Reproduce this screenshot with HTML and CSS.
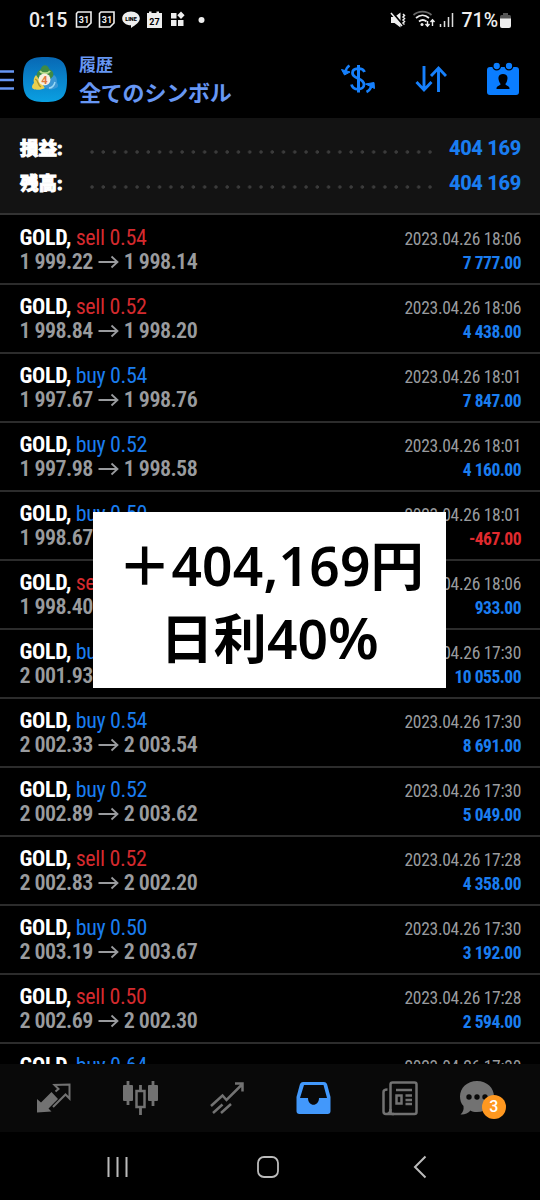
FILE: index.html
```
<!DOCTYPE html>
<html lang="ja">
<head>
    <meta charset="UTF-8">
    <meta name="viewport" content="width=device-width, initial-scale=1.0">
    <title>履歴</title>
    <link rel="stylesheet" href="styles.css">
</head>
<body>
    <div class="status-bar">
        <span class="clock">0:15</span>
        <svg class="status-icons" width="134" height="20" viewBox="0 0 134 20">
            <g fill="none" stroke="#eee" stroke-width="1.6">
                <path d="M3 2h13v11l-4 4H1.500V3.500z"/>
                <path d="M26 2h13v11l-4 4H24.500V3.500z"/>
            </g>
            <path d="M56 1.500c5 0 8.800 3 8.800 7 0 3.500-4 6.500-8.800 9.500v-2.700c-5 0-8.800-3-8.800-6.800s3.800-7 8.800-7z" fill="#eee"/>
            <path d="M72 3h2V1.500h2.500V3h5V1.500H84V3h3v15H72z" fill="#eee"/>
            <path d="M96 3h5.500v5.500H96zM96 10h5.500v6H96zM103 10h5.500v6H103zM106 1.500l3.600 3.700-3.600 3.700-3.700-3.700z" fill="#eee"/>
            <circle cx="126.500" cy="10" r="3" fill="#eee"/>
            <g class="tiny" text-anchor="middle">
                <text x="9" y="13">31</text>
                <text x="32" y="13">31</text>
                <text class="dark line" x="56" y="11">LINE</text>
                <text class="dark" x="79.500" y="14.500">27</text>
            </g>
        </svg>
        <svg class="status-right" width="65" height="20" viewBox="0 0 65 20">
            <path d="M1 7h3.500l6-4.500v15l-6-4.500H1z" fill="#eee"/>
            <path d="M1 1l12 14" stroke="#000" stroke-width="2"/>
            <path d="M1 3l11 13M13 4l1.500 1.500L13 7l1.500 1.500L13 10l1.500 1.500L13 13l1.500 1.500" fill="none" stroke="#eee" stroke-width="1.500"/>
            <g fill="none" stroke="#eee" stroke-width="1.700">
                <path d="M23.500 5c5-4.500 13-4.500 18 0" stroke="#666"/>
                <path d="M26 8c4-3.500 9-3.500 13 0M29 11.500c2.500-2 5-2 7.500 0"/>
                <path d="M37.500 11v5M35.500 14l2 2.200 2-2.200M42.500 16V10M40.500 12l2-2.200 2 2.200" stroke-width="1.400"/>
            </g>
            <circle cx="32" cy="14.500" r="1.500" fill="#eee"/>
            <path d="M50.500 17v-3M54.500 17v-6M58.500 17V7M62.500 17V3" stroke="#ddd" stroke-width="1.500"/>
        </svg>
        <span class="percent">71%</span>
        <svg width="11" height="17" viewBox="0 0 11 17">
            <path d="M3 1h5v2h1.500Q11 3 11 5v3H0V5q0-2 1.500-2H3z" fill="#555"/>
            <path d="M0 6.500h11V14q0 2-2 2H2q-2 0-2-2z" fill="#eee"/>
        </svg>
    </div>

    <div class="header">
        <svg class="menu" width="14" height="22" viewBox="0 0 14 22">
            <path d="M0 2.500h14M0 11h14M0 19.500h14" stroke="#6797f4" stroke-width="2.600"/>
        </svg>
        <svg class="logo" width="44" height="45" viewBox="0 0 44 45">
            <defs>
                <linearGradient id="sky" x1="0" y1="0" x2="0" y2="1">
                    <stop offset="0" stop-color="#0868b4"/>
                    <stop offset="1" stop-color="#0aa0e2"/>
                </linearGradient>
            </defs>
            <path d="M22 0c17 0 22 5 22 22.500S39 45 22 45 0 40 0 22.500 5 0 22 0z" fill="url(#sky)"/>
            <path d="M14 20c-1-4 1-6 4-8 1-5 7-5 8 0 4 2 5 4 4 8l-8 5z" fill="#3f8a45"/>
            <path d="M17 14c2 3 8 3 10 0" stroke="#b6dc88" stroke-width="1.800" fill="none"/>
            <path d="M13 18l9 13c-5 3-13 2-13-1 0-2 1-3 2-4-1-3 0-6 2-8z" fill="#e8cf4e"/>
            <path d="M31 18c3 2 3 5 3 8 2 2 1 5-1 5-3 2-8 2-12-1z" fill="#3a97d4"/>
            <path d="M12 22c4 1 2 6 6 8" stroke="#a8902a" stroke-width="1.200" fill="none"/>
            <path d="M26 31c3 0 5-2 6-6" stroke="#99d8f5" stroke-width="1.500" fill="none"/>
            <circle cx="21.500" cy="22.500" r="6" fill="#f7eedf"/>
            <text class="logo-num" x="21.500" y="26.500" text-anchor="middle">4</text>
        </svg>
        <div class="titles">
            <div class="title-small">履歴</div>
            <div class="title-big">全てのシンボル</div>
        </div>
        <svg class="tool-currency" width="36" height="32" viewBox="0 0 36 32" fill="none" stroke="#1680fc">
            <path d="M24.500 9C23 4.500 12.500 4 12.500 10c0 6.500 11.500 4.500 11.500 11.500 0 6-11 6.500-12.500 0" stroke-width="2.800"/>
            <path d="M18.500 2v27.500" stroke-width="3"/>
            <path d="M9.500 2.500C7 4 6 6 5.500 9" stroke-width="2.600"/>
            <path d="M1.500 6.500l8.500 2.500-5.500 3z" fill="#1680fc" stroke-width="1"/>
            <path d="M26.500 29c3-1.500 4.500-4 5-7" stroke-width="2.600"/>
            <path d="M25.500 21l8.500-1.500.5 6z" fill="#1680fc" stroke-width="1"/>
        </svg>
        <svg class="tool-sort" width="32" height="28" viewBox="0 0 32 28" fill="none" stroke="#1680fc" stroke-width="2.900">
            <path d="M9 1v24M1.500 17L9 25l7.500-8M23.500 27V3M16 11l7.500-8 7.500 8"/>
        </svg>
        <svg class="tool-calendar" width="32" height="34" viewBox="0 0 32 34">
            <path d="M3 5h26q3 0 3 3v22q0 3-3 3H3q-3 0-3-3V8q0-3 3-3z" fill="#0a7dff"/>
            <g fill="#0a7dff" stroke="#000" stroke-width="1.300">
                <circle cx="9.700" cy="4" r="3.800"/>
                <circle cx="22" cy="4" r="3.800"/>
            </g>
            <path d="M16 12c5 0 5 4 4 7-.500 2-1.500 2-1.500 3.500 1 1.500 4 1 4 4.500h-13c0-3.500 3-3 4-4.500 0-1.500-1-1.500-1.500-3.500-1-3-1-7 4-7z" fill="#000"/>
        </svg>
    </div>

    <div class="summary">
        <div class="summary-row">
            <span class="label">損益:</span><span class="dots"></span><span class="total">404 169</span>
        </div>
        <div class="summary-row">
            <span class="label">残高:</span><span class="dots"></span><span class="total">404 169</span>
        </div>
    </div>

    <div class="history">
        <div class="deal">
            <div><div class="order">GOLD, <span class="sell">sell 0.54</span></div><div class="prices">1 999.22<svg class="arrow"><use href="#arrow"/></svg>1 998.14</div></div>
            <div class="right"><div class="date">2023.04.26 18:06</div><div class="profit">7 777.00</div></div>
        </div>
        <div class="deal">
            <div><div class="order">GOLD, <span class="sell">sell 0.52</span></div><div class="prices">1 998.84<svg class="arrow"><use href="#arrow"/></svg>1 998.20</div></div>
            <div class="right"><div class="date">2023.04.26 18:06</div><div class="profit">4 438.00</div></div>
        </div>
        <div class="deal">
            <div><div class="order">GOLD, <span class="buy">buy 0.54</span></div><div class="prices">1 997.67<svg class="arrow"><use href="#arrow"/></svg>1 998.76</div></div>
            <div class="right"><div class="date">2023.04.26 18:01</div><div class="profit">7 847.00</div></div>
        </div>
        <div class="deal">
            <div><div class="order">GOLD, <span class="buy">buy 0.52</span></div><div class="prices">1 997.98<svg class="arrow"><use href="#arrow"/></svg>1 998.58</div></div>
            <div class="right"><div class="date">2023.04.26 18:01</div><div class="profit">4 160.00</div></div>
        </div>
        <div class="deal">
            <div><div class="order">GOLD, <span class="buy">buy 0.50</span></div><div class="prices">1 998.67</div></div>
            <div class="right"><div class="date">2023.04.26 18:01</div><div class="profit loss">-467.00</div></div>
        </div>
        <div class="deal">
            <div><div class="order">GOLD, <span class="sell">sell</span></div><div class="prices">1 998.40</div></div>
            <div class="right"><div class="date">2023.04.26 18:06</div><div class="profit">933.00</div></div>
        </div>
        <div class="deal">
            <div><div class="order">GOLD, <span class="buy">buy</span></div><div class="prices">2 001.93</div></div>
            <div class="right"><div class="date">2023.04.26 17:30</div><div class="profit">10 055.00</div></div>
        </div>
        <div class="deal">
            <div><div class="order">GOLD, <span class="buy">buy 0.54</span></div><div class="prices">2 002.33<svg class="arrow"><use href="#arrow"/></svg>2 003.54</div></div>
            <div class="right"><div class="date">2023.04.26 17:30</div><div class="profit">8 691.00</div></div>
        </div>
        <div class="deal">
            <div><div class="order">GOLD, <span class="buy">buy 0.52</span></div><div class="prices">2 002.89<svg class="arrow"><use href="#arrow"/></svg>2 003.62</div></div>
            <div class="right"><div class="date">2023.04.26 17:30</div><div class="profit">5 049.00</div></div>
        </div>
        <div class="deal">
            <div><div class="order">GOLD, <span class="sell">sell 0.52</span></div><div class="prices">2 002.83<svg class="arrow"><use href="#arrow"/></svg>2 002.20</div></div>
            <div class="right"><div class="date">2023.04.26 17:28</div><div class="profit">4 358.00</div></div>
        </div>
        <div class="deal">
            <div><div class="order">GOLD, <span class="buy">buy 0.50</span></div><div class="prices">2 003.19<svg class="arrow"><use href="#arrow"/></svg>2 003.67</div></div>
            <div class="right"><div class="date">2023.04.26 17:30</div><div class="profit">3 192.00</div></div>
        </div>
        <div class="deal">
            <div><div class="order">GOLD, <span class="sell">sell 0.50</span></div><div class="prices">2 002.69<svg class="arrow"><use href="#arrow"/></svg>2 002.30</div></div>
            <div class="right"><div class="date">2023.04.26 17:28</div><div class="profit">2 594.00</div></div>
        </div>
        <div class="deal">
            <div><div class="order">GOLD, <span class="buy">buy 0.64</span></div></div>
            <div class="right"><div class="date">2023.04.26 17:30</div></div>
        </div>
    </div>

    <div class="tabs">
        <svg width="36" height="32" viewBox="0 0 36 32">
            <path d="M1 30.500V17l4 3.500L15.500 10l6.500 7-9.500 9.500 3 3z" fill="#727272"/>
            <path d="M17 25L29.500 12.500l4 4V2.500L18.500 3l4 4-3 2.500" fill="none" stroke="#727272" stroke-width="2"/>
        </svg>
        <svg width="37" height="36" viewBox="0 0 37 36">
            <path d="M6 1v24M31 1v25M18.500 5v6M18.500 28v7" stroke="#727272" stroke-width="2.800"/>
            <rect x="1" y="5" width="10" height="16" rx="1" fill="#727272"/>
            <rect x="26" y="5" width="10" height="16" rx="1" fill="#727272"/>
            <rect x="14.500" y="11" width="8" height="16" fill="none" stroke="#727272" stroke-width="2.500"/>
        </svg>
        <svg width="34" height="34" viewBox="0 0 34 34" fill="none" stroke="#727272" stroke-width="2.500">
            <path d="M1 25l11.500-10.500 4 4.500L32 3.500M25 2.500h7.500v8M3 32l9.500-8.500M11 32l10-9"/>
        </svg>
        <svg width="35" height="34" viewBox="0 0 35 34">
            <path d="M7 1h21q2 0 3 2l3.500 13v14q0 3-3 3h-28q-3 0-3-3V16L4 3q1-2 3-2z" fill="#4298fb"/>
            <path d="M8 4h19.500l3.500 13h-8c0 9-11 9-11 0H4z" fill="#090909"/>
        </svg>
        <svg width="36" height="35" viewBox="0 0 36 35" fill="none" stroke="#727272" stroke-width="2.500">
            <rect x="8.500" y="1.500" width="26" height="31.500" rx="2"/>
            <path d="M5.500 8.500Q1.500 8.500 1.500 11v19.500Q1.500 33 4 33h8M8.500 28q0 5-4 5M14 9h16M23.500 14.500H30M23.500 19H30M23.500 23H30"/>
            <rect x="14.500" y="14.500" width="5" height="8"/>
        </svg>
        <div class="chat">
            <svg width="36" height="36" viewBox="0 0 36 36">
                <path d="M18 1c10 0 17 7 17 15.500S28 32 18 32c-3 0-5-.500-6.500-1.500C9 33.500 5 35 1.500 34.500 4 32 5 30 4.500 26 2 23.500 1 20 1 16.500 1 8 8 1 18 1z" fill="#727272"/>
                <g fill="#090909"><circle cx="10" cy="17" r="2.700"/><circle cx="18" cy="17" r="2.700"/><circle cx="26" cy="17" r="2.700"/></g>
            </svg>
            <span class="badge">3</span>
        </div>
    </div>

    <div class="nav">
        <svg width="22" height="22" viewBox="0 0 22 22"><path d="M1.500 1v20M10.500 1v20M19.500 1v20" stroke="#bbb" stroke-width="2"/></svg>
        <svg class="home" width="22" height="22" viewBox="0 0 22 22"><rect x="1" y="1" width="20" height="20" rx="6" fill="none" stroke="#bbb" stroke-width="1.800"/></svg>
        <svg width="14" height="24" viewBox="0 0 14 24"><path d="M12.500 1.500L2 12l10.500 10.500" fill="none" stroke="#bbb" stroke-width="2"/></svg>
    </div>

    <div class="overlay">
        <div class="amount">＋404,169円</div>
        <div class="rate">日利40<span class="rate-sign">%</span></div>
    </div>

    <svg width="0" height="0">
        <symbol id="arrow" viewBox="0 0 22 14">
            <path d="M.5 7h19M13.500 1.500L19.500 7l-6 5.500" fill="none" stroke="#999b9e" stroke-width="1.800"/>
        </symbol>
    </svg>
</body>
</html>
```
FILE: styles.css
```
* {
    box-sizing: border-box;
}
body {
    margin: 0;
    width: 540px;
    height: 1200px;
    overflow: hidden;
    position: relative;
    background-color: #000;
    color: #fff;
    font-family: Roboto, "Noto Sans CJK JP", sans-serif;
}
svg {
    display: block;
    flex-shrink: 0;
}
.status-bar {
    display: flex;
    align-items: center;
    height: 40px;
    padding: 0 29px 0 29px;
    color: #eee;
}
.clock {
    width: 46px;
    font-size: 19.5px;
    font-weight: 500;
}
.tiny {
    fill: #eee;
    font-size: 9px;
    font-weight: 700;
}
.tiny .dark {
    fill: #000;
}
.tiny .line {
    font-size: 5.5px;
    font-weight: 900;
}
.status-right {
    margin-left: auto;
}
.percent {
    margin: 0 2px 0 6px;
    font-size: 19.5px;
    font-weight: 500;
}
.header {
    display: flex;
    align-items: center;
    height: 78px;
    padding-right: 21px;
}
.menu {
    margin-top: 2px;
}
.logo {
    margin-left: 9px;
}
.titles {
    margin: 3px 0 0 12px;
    color: #6797f4;
    font-weight: 600;
    white-space: nowrap;
}
.title-small {
    font-size: 17px;
    line-height: 25px;
}
.title-big {
    font-size: 22px;
    line-height: 31px;
    letter-spacing: -0.2px;
}
.tool-currency {
    margin-left: auto;
}
.tool-sort {
    margin-left: 39px;
}
.tool-calendar {
    margin-left: 40px;
}
.summary {
    height: 97px;
    padding: 12px 19px 0 20px;
    background-color: #131313;
    border-bottom: 2px solid #333;
}
.summary-row {
    display: flex;
    align-items: center;
    height: 35px;
    font-weight: 700;
}
.label {
    width: 69px;
    padding-bottom: 2px;
    font-size: 18.5px;
    font-weight: 900;
    -webkit-text-stroke: 1px #fff;
}
.dots {
    width: 347px;
    height: 4px;
    margin-top: 9px;
    background: radial-gradient(circle at 3px 2px, #3b3b3b 1.4px, transparent 2px) 0 0 / 11.27px 4px;
}
.total {
    margin-left: auto;
    color: #1a7df0;
    font-size: 20px;
    font-weight: 800;
    letter-spacing: -0.3px;
}
.history {
    height: 849px;
    padding-top: 1px;
    overflow: hidden;
}
.deal {
    display: flex;
    justify-content: space-between;
    height: 69px;
    padding: 9px 19px 0 19.5px;
    border-bottom: 2px solid #2c2c2c;
    font-stretch: 75%;
    white-space: nowrap;
}
.order {
    font-size: 22px;
    line-height: 25px;
    font-weight: 700;
    letter-spacing: -0.35px;
}
.order span {
    font-weight: 400;
}
.sell {
    color: #d42a2e;
}
.buy {
    color: #1a7df0;
}
.prices {
    display: flex;
    align-items: center;
    color: #999b9e;
    font-size: 22px;
    line-height: 24px;
    font-weight: 600;
    letter-spacing: -0.55px;
}
.arrow {
    width: 22px;
    height: 14px;
    margin: 0 4px 0 5px;
}
.right {
    padding-top: 2px;
    text-align: right;
}
.date {
    color: #999b9e;
    font-size: 17.5px;
    line-height: 24px;
    letter-spacing: -0.28px;
}
.profit {
    color: #1a7df0;
    font-size: 17.5px;
    line-height: 24px;
    font-weight: 700;
    letter-spacing: -0.5px;
}
.loss {
    color: #e02a2e;
}
.tabs {
    display: grid;
    grid-template-columns: repeat(6, 86.5px);
    align-items: center;
    justify-items: center;
    height: 68px;
    padding: 0 0 0 11px;
    background-color: #090909;
}
.chat {
    position: relative;
    width: 56px;
}
.badge {
    position: absolute;
    left: 23px;
    top: 15px;
    width: 24px;
    height: 24px;
    border-radius: 50%;
    background-color: #ff9820;
    font-size: 16px;
    font-weight: 500;
    line-height: 24px;
    text-align: center;
}
.nav {
    display: grid;
    grid-template-columns: repeat(3, 151px);
    align-items: center;
    justify-items: center;
    height: 70px;
    padding-left: 42px;
}
.home {
    margin-right: 2px;
}
/* profit banner lies over the list */
.overlay {
    position: absolute;
    left: 93px;
    top: 512px;
    width: 353px;
    height: 176px;
    padding-top: 17px;
    background-color: #fff;
    color: #000;
    font-family: "Noto Sans", "Noto Sans CJK JP", sans-serif;
    font-size: 53.3px;
    font-weight: 650;
    line-height: 73px;
    text-align: center;
    white-space: nowrap;
}
.amount {
    letter-spacing: 0.2px;
    padding-left: 3px;
}
.rate-sign {
    font-size: 58px;
    line-height: 0;
}
.logo-num {
    fill: #e0783c;
    font-size: 11px;
    font-weight: 700;
}
```
